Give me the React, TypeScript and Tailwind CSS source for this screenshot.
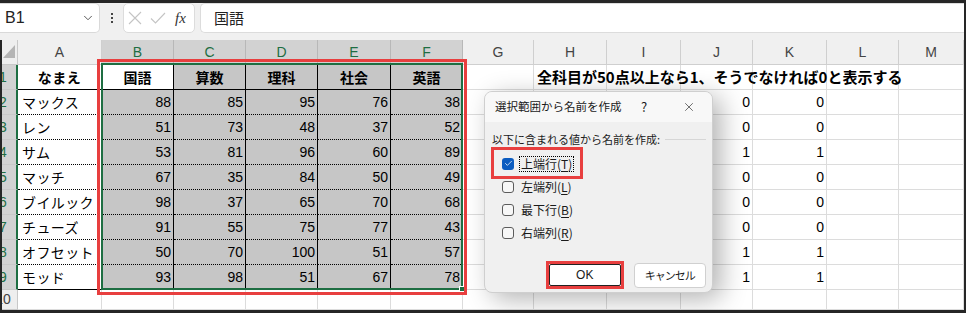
import { Check, ChevronDown, X } from "lucide-react";

const cols = [
  { k: "A", w: "w-[84px]" },
  { k: "B", w: "w-[72px]" },
  { k: "C", w: "w-[72px]" },
  { k: "D", w: "w-[72px]" },
  { k: "E", w: "w-[73px]" },
  { k: "F", w: "w-[72px]" },
  { k: "G", w: "w-[71px]" },
  { k: "H", w: "w-[73px]" },
  { k: "I", w: "w-[74px]" },
  { k: "J", w: "w-[72px]" },
  { k: "K", w: "w-[74px]" },
  { k: "L", w: "w-[72px]" },
  { k: "M", w: "w-[65px]" },
];

const subjects = ["国語", "算数", "理科", "社会", "英語"];
const names = ["マックス", "レン", "サム", "マッチ", "ブイルック", "チューズ", "オフセット", "モッド"];
const scores = [
  [88, 85, 95, 76, 38],
  [51, 73, 48, 37, 52],
  [53, 81, 96, 60, 89],
  [67, 35, 84, 50, 49],
  [98, 37, 65, 70, 68],
  [91, 55, 75, 77, 43],
  [50, 70, 100, 51, 57],
  [93, 98, 51, 67, 78],
];
const flags = [0, 0, 1, 0, 0, 0, 1, 1];

const selCols = "BCDEF";

function cellClass(r: number, c: string) {
  const inTable = r <= 9 && "ABCDEF".includes(c);
  if (!inTable) return "bg-white border-r border-b border-[#dcdcdc]";
  const bg = c === "A" || (c === "B" && r === 1) ? "bg-white" : "bg-[#c6c6c6]";
  const bottom = r === 1 || r === 9 ? "border-b border-black" : "border-b border-black [border-bottom-style:dotted]";
  return `${bg} border-r ${bottom}`;
}

function cellContent(r: number, c: string) {
  const ci = selCols.indexOf(c);
  if (r === 1) {
    if (c === "A") return <span className="w-full text-center font-bold tracking-[0.5px]">なまえ</span>;
    if (ci >= 0) return <span className="w-full text-center font-bold">{subjects[ci]}</span>;
    if (c === "H")
      return (
        <span className="relative z-10 whitespace-nowrap pl-[3px] text-[15px] font-bold">
          全科目が50点以上なら1、そうでなければ0と表示する
        </span>
      );
    return null;
  }
  if (r >= 2 && r <= 9) {
    if (c === "A") return <span className="whitespace-nowrap pl-[4px] tracking-[0.4px]">{names[r - 2]}</span>;
    if (ci >= 0) return <span className="w-full pr-[2px] text-right">{scores[r - 2][ci]}</span>;
    if (c === "J" || c === "K") return <span className="w-full pr-[2px] text-right">{flags[r - 2]}</span>;
  }
  return null;
}

function RowHeader({ n }: { n: number }) {
  const sel = n <= 9;
  return (
    <div
      className={`flex h-full w-[16px] shrink-0 items-center overflow-hidden border-b border-[#c8c8c8] ${
        sel ? "border-r-2 border-r-[#1e6e42] bg-[#d2d2d2] text-[#1e6e42]" : "border-r border-r-[#c8c8c8] bg-[#eeeeee] text-[#444]"
      }`}
    >
      <span className="-ml-[14px] w-[30px] shrink-0 text-center text-[14px]">{n}</span>
    </div>
  );
}

function Checkbox({ checked }: { checked?: boolean }) {
  if (checked)
    return (
      <span className="flex h-[12px] w-[12px] shrink-0 items-center justify-center rounded-[3px] bg-[#0b5cc0]">
        <Check className="h-[9px] w-[9px] text-white" strokeWidth={2} />
      </span>
    );
  return <span className="h-[12px] w-[12px] shrink-0 rounded-[3px] border border-[#5c5c5c] bg-[#f7f7f7]" />;
}

function Dialog() {
  const opts = [
    { t: "上端行", k: "T", on: true },
    { t: "左端列", k: "L" },
    { t: "最下行", k: "B" },
    { t: "右端列", k: "R" },
  ];
  return (
    <div className="absolute left-[484px] top-[91px] z-20 flex h-[202px] w-[229px] flex-col overflow-hidden rounded-[8px] border border-[#cfcfcf] bg-[#f0f0f0] text-[11.5px] text-[#1a1a1a] shadow-[8px_6px_26px_rgba(0,0,0,0.3)] font-['Noto_Sans_CJK_JP',sans-serif]">
      <div className="flex h-[30px] shrink-0 items-center bg-[#f8f8f8] pl-[10px]">
        <span className="flex-1">選択範囲から名前を作成</span>
        <span className="w-[16px] text-center text-[13px]">?</span>
        <span className="ml-[22px] mr-[8px] flex w-[30px] justify-center">
          <X className="h-[14px] w-[14px] text-[#333]" strokeWidth={1.2} />
        </span>
      </div>
      <div className="relative flex flex-1 flex-col pl-[7px] pr-[6px] pt-[9px]">
        <div className="flex h-[16px] items-center">
          <span className="text-[11px]">以下に含まれる値から名前を作成:</span>
          <span className="ml-[5px] h-px flex-1 bg-[#d6d6d6]" />
        </div>
        <div className="ml-[10px] mt-[5px] flex flex-col">
          {opts.map((o) => (
            <div key={o.k} className="flex h-[23px] items-center gap-[5px]">
              <Checkbox checked={o.on} />
              <span className={`px-[1px] text-[12px] leading-[14px] ${o.on ? "border border-dotted border-black" : "border border-transparent"}`}>
                {o.t}(<span className="underline underline-offset-2">{o.k}</span>)
              </span>
            </div>
          ))}
        </div>
        <div className="ml-[54px] mt-[17px] flex items-center gap-[10px]">
          <div className="flex h-[28px] w-[78px] border-[3px] border-[#e83f3f]">
            <div className="flex flex-1 items-center justify-center rounded-[2px] border border-[#222] bg-white text-[12px] font-['Liberation_Sans',sans-serif]">
              OK
            </div>
          </div>
          <div className="flex h-[25px] w-[73px] items-center justify-center rounded-[4px] border border-[#d0d0d0] bg-white text-[11px] tracking-[-1px]">
            キャンセル
          </div>
        </div>
        <div className="absolute left-[6px] top-[25px] h-[32px] w-[92px] border-[3px] border-[#e83f3f]" />
      </div>
    </div>
  );
}

export default function App() {
  const rows = [1, 2, 3, 4, 5, 6, 7, 8, 9, 10];
  return (
    <div className="relative h-[313px] w-[966px] overflow-hidden bg-[#262626] pb-[3px] pr-[2px] pt-[3px] font-['Liberation_Sans','Noto_Sans_CJK_JP',sans-serif] text-[14px] text-black">
      {/* formula bar */}
      <div className="flex h-[37px] items-start bg-[#f0f0f0]">
        <div className="flex h-[30px] w-[100px] shrink-0 items-center rounded-r-[5px] border border-l-0 border-[#d9d9d9] bg-white pl-[5px] pr-[4px]">
          <span className="flex-1 text-[16px] text-[#222]">B1</span>
          <ChevronDown className="h-[14px] w-[14px] text-[#444]" strokeWidth={1.5} />
        </div>
        <div className="flex h-[30px] w-[23px] shrink-0 flex-col items-center justify-center gap-[2px]">
          <span className="h-[2px] w-[2px] bg-[#444]" />
          <span className="h-[2px] w-[2px] bg-[#444]" />
          <span className="h-[2px] w-[2px] bg-[#444]" />
        </div>
        <div className="flex h-[30px] w-[72px] shrink-0 items-center rounded-[5px] border border-[#dcdcdc] bg-white pl-[4px]">
          <svg width="14" height="14" viewBox="0 0 14 14" className="text-[#c4c4c4]">
            <path d="M1 1 13 13M13 1 1 13" stroke="currentColor" strokeWidth="1.1" fill="none" />
          </svg>
          <svg width="16" height="12" viewBox="0 0 16 12" className="ml-[8px] text-[#c4c4c4]">
            <path d="M1 6.5 5.5 11 15 1" stroke="currentColor" strokeWidth="1.1" fill="none" />
          </svg>
          <span className="ml-[9px] font-['Liberation_Serif',serif] text-[15px] italic text-[#333]">fx</span>
        </div>
        <div className="ml-[5px] flex h-[30px] flex-1 items-center rounded-l-[5px] border border-r-0 border-[#dcdcdc] bg-white pl-[13px] font-['Noto_Sans_CJK_JP',sans-serif] text-[15px] text-[#222]">
          国語
        </div>
      </div>

      {/* grid */}
      <div className="ml-[2px] flex flex-col">
        <div className="flex h-[25px]">
          <div className="relative h-full w-[16px] shrink-0 border-b border-r border-[#c8c8c8] bg-[#eeeeee]">
            <svg className="absolute bottom-[6px] right-[2px]" width="12" height="13" viewBox="0 0 12 13">
              <polygon points="12,0 12,13 0,13" fill="#b4b4b4" />
            </svg>
          </div>
          {cols.map((c) => {
            const sel = selCols.includes(c.k);
            return (
              <div
                key={c.k}
                className={`flex h-full shrink-0 items-center justify-center border-b border-r text-[14px] ${c.w} ${
                  sel ? "border-[#b8b8b8] bg-[#d2d2d2] text-[#1e6e42]" : "border-[#cfcfcf] bg-[#f0f0f0] text-[#444]"
                }`}
              >
                {c.k}
              </div>
            );
          })}
        </div>
        {rows.map((r) => (
          <div key={r} className={`flex ${r === 10 ? "h-[20px]" : "h-[25px]"}`}>
            <RowHeader n={r} />
            {cols.map((c) => (
              <div
                key={c.k}
                className={`flex h-full shrink-0 items-center ${c.w} ${cellClass(r, c.k)} ${
                  c.k === "A" || r === 1 ? "font-['Noto_Sans_CJK_JP',sans-serif]" : ""
                }`}
              >
                {cellContent(r, c.k)}
              </div>
            ))}
          </div>
        ))}
      </div>

      {/* selection + annotations */}
      <div className="absolute left-[101px] top-[63px] h-[227px] w-[362px] border-2 border-[#1e6e42]" />
      <div className="absolute left-[459px] top-[286px] h-[6px] w-[6px] border border-white bg-[#1e6e42]" />
      <div className="absolute left-[97px] top-[59px] h-[236px] w-[370px] border-[3px] border-[#e83f3f]" />

      <Dialog />
    </div>
  );
}
